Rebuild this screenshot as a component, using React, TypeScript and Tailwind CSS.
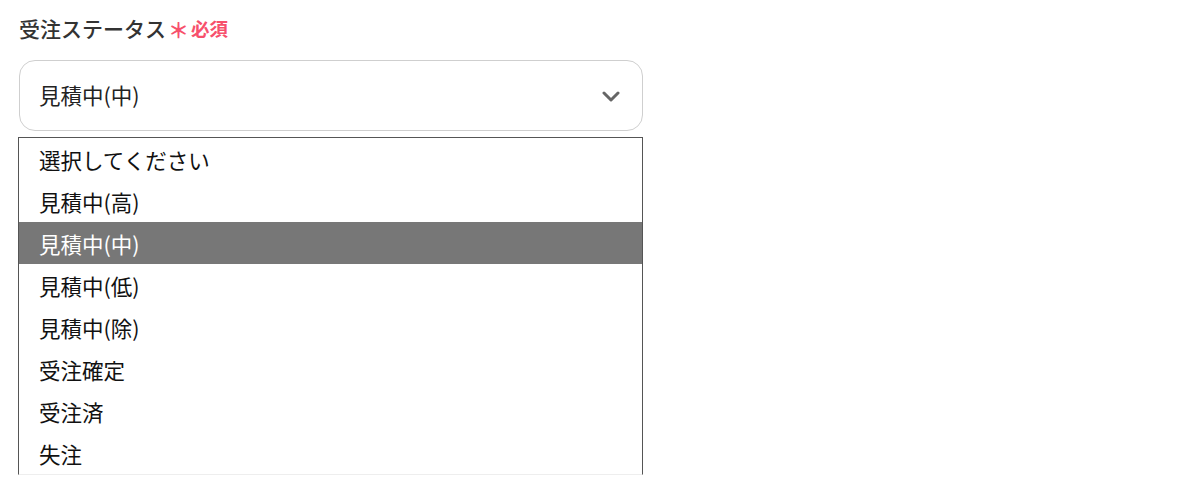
const options = [
  '選択してください',
  '見積中(高)',
  '見積中(中)',
  '見積中(低)',
  '見積中(除)',
  '受注確定',
  '受注済',
  '失注',
]

export default function App() {
  const selected = '見積中(中)'

  return (
    <div
      className="w-[1179px] h-[481px] overflow-hidden bg-white pl-[18px] pt-[14px]"
      style={{ fontFamily: '"Noto Sans CJK JP", "Noto Sans", sans-serif' }}
    >
      <div className="w-[625px]">
        <div className="flex items-center h-[30px] pl-px">
          <span className="text-[21px] font-medium text-[#333]">受注ステータス</span>
          <span className="ml-[2px] text-[21px] font-bold text-[#f7506c] leading-none">＊</span>
          <span className="ml-[2px] text-[18.5px] font-bold text-[#f7506c]">必須</span>
        </div>

        <div className="mt-[16px] ml-px h-[71px] rounded-[16px] border border-[#cfcfcf] flex items-center justify-between pl-[19px] pr-[22px]">
          <span className="text-[21.5px] text-[#222]">{selected}</span>
          <svg width="18" height="12" viewBox="0 0 18 12" className="mt-[2px]">
            <polyline
              points="2,2 9,9 16,2"
              fill="none"
              stroke="#666"
              strokeWidth="3"
              strokeLinecap="round"
              strokeLinejoin="round"
            />
          </svg>
        </div>

        <ul className="mt-[6px] h-[338px] border border-[#555] border-b-[#eee] overflow-hidden">
          {options.map((o) => (
            <li
              key={o}
              className={
                'h-[42px] flex items-center pl-[20px] pt-[2px] text-[21.5px] ' +
                (o === selected ? 'bg-[#777] text-white' : 'text-[#111]')
              }
            >
              {o}
            </li>
          ))}
        </ul>
      </div>
    </div>
  )
}
